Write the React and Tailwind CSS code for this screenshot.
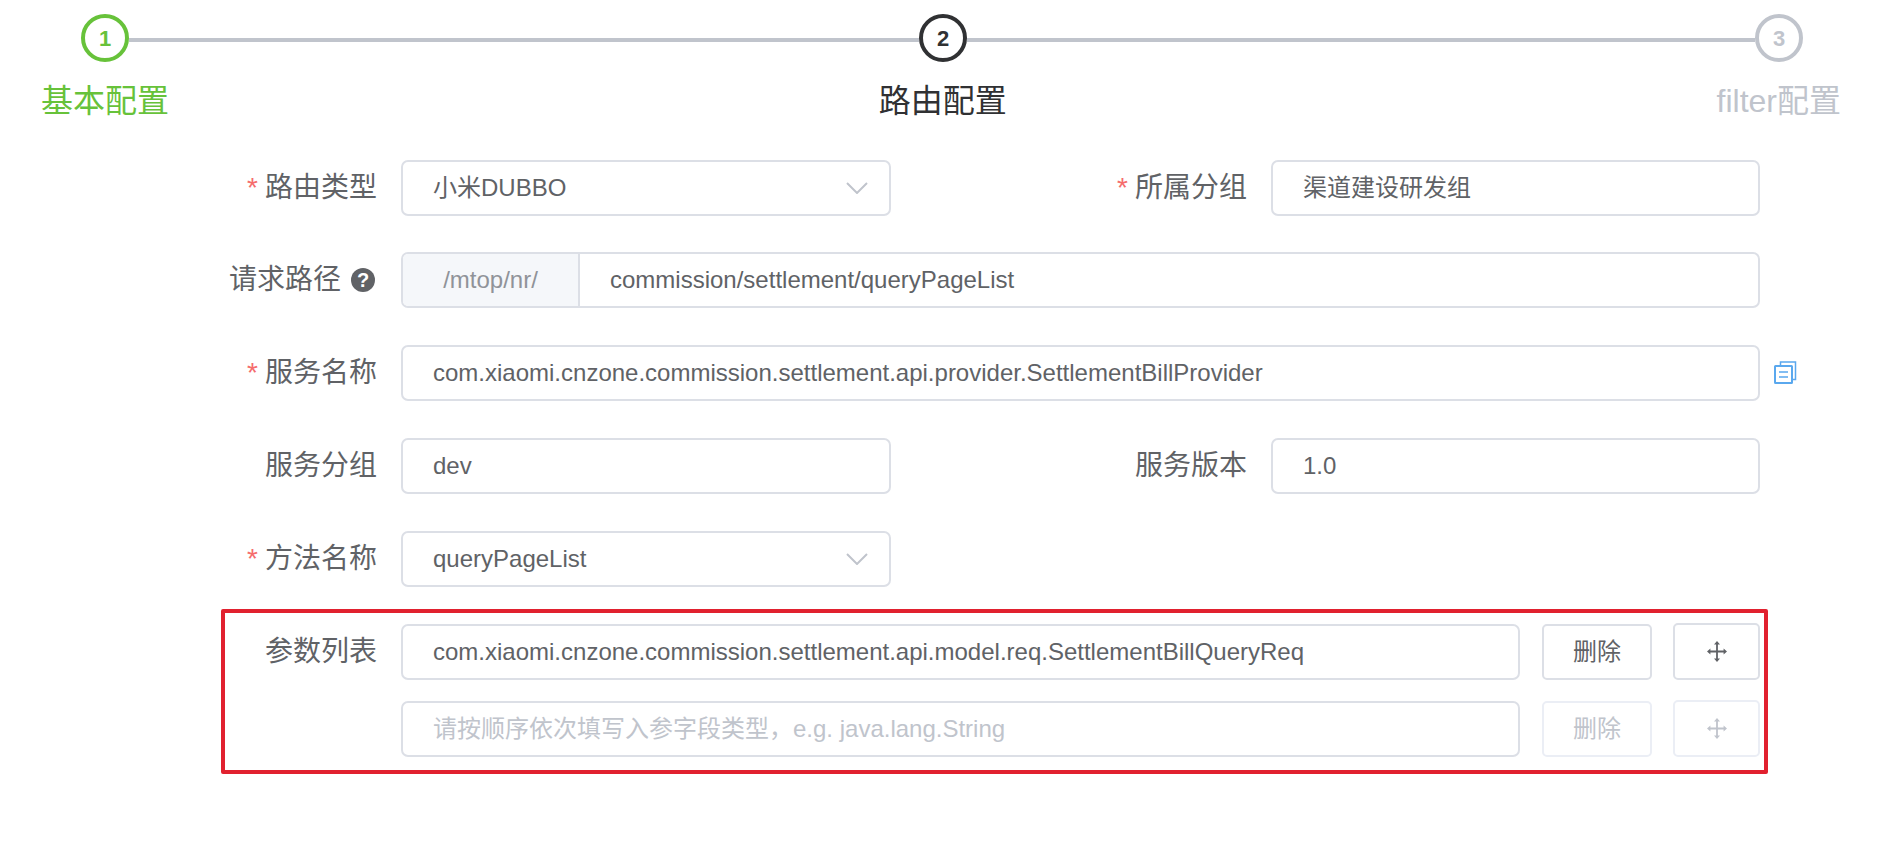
import React from 'react';

const labelClass = 'flex w-[377px] shrink-0 items-center justify-end text-[28px] text-[#606266]';
const fieldClass = 'flex h-[56px] items-center rounded-[7px] border-2 border-[#dcdfe6] bg-white px-[30px] text-[24px] text-[#606266]';

const ChevronDown = () => (
  <svg width="22" height="12" viewBox="0 0 22 12" fill="none" className="shrink-0">
    <path d="M1 1l10 10L21 1" stroke="#c0c4cc" strokeWidth="2" />
  </svg>
);

const MoveIcon = ({ color }) => (
  <svg width="20" height="21" viewBox="0 0 20 21" fill={color}>
    <path d="M9.1 3h1.8v6.6H17v1.8h-6.1V18H9.1v-6.6H3V9.6h6.1z" />
    <path d="M10 0l3 3.6H7zM10 21l-3-3.6h6zM0 10.5l3.4-3v6zM20 10.5l-3.4 3v-6z" />
  </svg>
);

const CopyIcon = () => (
  <svg width="23" height="23" viewBox="0 0 23 23" fill="none" stroke="#5aa8ee" strokeWidth="2">
    <path d="M6.5 4V1h15v17.5h-3" strokeWidth="1.5" />
    <rect x="1" y="5" width="17" height="17" rx="0.5" />
    <path d="M5 11h9M5 16h9" strokeWidth="1.6" />
  </svg>
);

const Step = ({ n, circleClass }) => (
  <div className={`flex h-[48px] w-[48px] shrink-0 items-center justify-center rounded-full border-4 text-[22px] font-bold ${circleClass}`}>
    {n}
  </div>
);

const FormRow = ({ label, required, className = '', children }) => (
  <div className={`flex h-[56px] items-center ${className}`}>
    <div className={labelClass}>
      {required && <span className="mr-[7px] text-[#f56c6c]">*</span>}
      {label}
    </div>
    <div className="ml-[24px] flex min-w-0 flex-1 items-center">{children}</div>
  </div>
);

const SelectBox = ({ value }) => (
  <div className={`${fieldClass} w-[490px] justify-between !pr-[21px]`}>
    <span>{value}</span>
    <ChevronDown />
  </div>
);

const ParamRow = ({ value, placeholder, disabled, label }) => (
  <FormRow label={label}>
    <div className={`${fieldClass} w-[1119px] ${disabled ? '!text-[#c0c4cc]' : ''}`}>{value || placeholder}</div>
    <div className={`ml-[22px] flex h-[56px] w-[110px] items-center justify-center rounded-[5px] border-2 text-[24px] ${disabled ? 'border-[#ebeef5] text-[#c0c4cc]' : 'border-[#dcdfe6] text-[#606266]'}`}>
      删除
    </div>
    <div className={`ml-[21px] flex h-[57px] w-[87px] items-center justify-center rounded-[5px] border-2 ${disabled ? 'border-[#ebeef5]' : 'border-[#dcdfe6]'}`}>
      <MoveIcon color={disabled ? '#c0c4cc' : '#606266'} />
    </div>
  </FormRow>
);

export default function App() {
  return (
    <div className="h-[851px] overflow-hidden bg-white pt-[14px] font-['Liberation_Sans','Noto_Sans_CJK_SC',sans-serif]">
      {/* Steps */}
      <div className="flex items-center pl-[81px] pr-[88px]">
        <Step n="1" circleClass="border-[#67c23a] text-[#67c23a]" />
        <div className="mt-[4px] h-[4px] w-[790px] bg-[#c0c4cc]" />
        <Step n="2" circleClass="border-[#303133] text-[#303133]" />
        <div className="mt-[4px] h-[4px] flex-1 bg-[#c0c4cc]" />
        <Step n="3" circleClass="border-[#c0c4cc] text-[#c0c4cc]" />
      </div>
      <div className="mt-[15px] flex justify-between pl-[41px] pr-[50px] text-[32px] leading-[48px]">
        <span className="text-[#67c23a]">基本配置</span>
        <span className="text-[#303133]">路由配置</span>
        <span className="text-[#c0c4cc]">filter配置</span>
      </div>

      {/* Form */}
      <div className="mt-[35px] flex flex-col gap-[36.7px] pr-[131px]">
        <FormRow label="路由类型" required>
          <SelectBox value="小米DUBBO" />
          <div className={`${labelClass} !w-[356px]`}>
            <span className="mr-[7px] text-[#f56c6c]">*</span>所属分组
          </div>
          <div className={`${fieldClass} ml-[24px] flex-1`}>渠道建设研发组</div>
        </FormRow>

        <FormRow
          className="mt-[-0.8px] mb-[0.8px]"
          label={
            <>
              请求路径
              <span className="ml-[10px] mr-[2px] flex h-[24px] w-[24px] items-center justify-center rounded-full bg-[#606266] text-[20px] font-bold leading-none text-white">?</span>
            </>
          }
        >
          <div className="flex h-[56px] flex-1 items-center rounded-[7px] border-2 border-[#dcdfe6] text-[24px] text-[#606266]">
            <div className="flex h-full w-[177px] items-center justify-center rounded-l-[5px] border-r-2 border-[#dcdfe6] bg-[#f5f7fa] text-[#909399]">
              /mtop/nr/
            </div>
            <div className="pl-[30px]">commission/settlement/queryPageList</div>
          </div>
        </FormRow>

        <FormRow label="服务名称" required>
          <div className={`${fieldClass} flex-1`}>com.xiaomi.cnzone.commission.settlement.api.provider.SettlementBillProvider</div>
          <div className="relative">
            <div className="absolute left-[14px] top-[-12px]">
              <CopyIcon />
            </div>
          </div>
        </FormRow>

        <FormRow label="服务分组">
          <div className={`${fieldClass} w-[490px]`}>dev</div>
          <div className={`${labelClass} !w-[356px]`}>服务版本</div>
          <div className={`${fieldClass} ml-[24px] flex-1`}>1.0</div>
        </FormRow>

        <FormRow label="方法名称" required>
          <SelectBox value="queryPageList" />
        </FormRow>

        {/* Parameter list, marked with a red frame */}
        <div className="relative mt-[0.5px] flex flex-col gap-[21px]">
          <ParamRow label="参数列表" value="com.xiaomi.cnzone.commission.settlement.api.model.req.SettlementBillQueryReq" />
          <ParamRow label="" placeholder="请按顺序依次填写入参字段类型，e.g. java.lang.String" disabled />
          <div className="pointer-events-none absolute left-[221px] top-[-15px] h-[165px] w-[1547px] rounded-[2px] border-4 border-[#e1212f]" />
        </div>
      </div>
    </div>
  );
}
